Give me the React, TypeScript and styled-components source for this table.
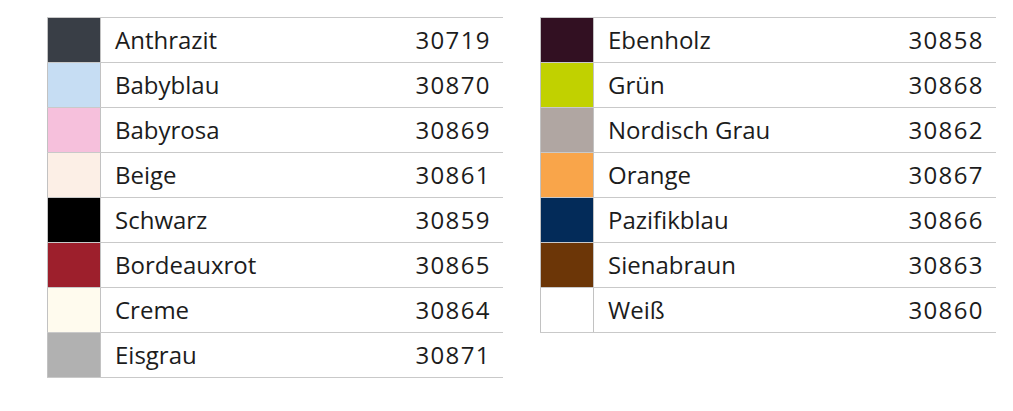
import React from "react";
import styled, { createGlobalStyle } from "styled-components";

const Global = createGlobalStyle`
  html, body { margin: 0; padding: 0; background: #ffffff; }
  body { font-family: "Open Sans", "Noto Sans", sans-serif; color: #1c1c1c; }
`;

const Page = styled.div`
  display: flex;
  align-items: flex-start;
  gap: 37px;
  padding: 17px 0 0 47px;
`;

const Table = styled.div`
  width: 456px;
  display: flex;
  flex-direction: column;
  border-top: 1px solid #c9c9c9;
`;

const Row = styled.div`
  display: grid;
  grid-template-columns: 54px 1fr;
  height: 45px;
  box-sizing: border-box;
  border-bottom: 1px solid #c9c9c9;
`;

const Swatch = styled.div<{ $c: string }>`
  background: ${(p) => p.$c};
  border-left: 1px solid #c2c2c2;
  border-right: 1px solid #c2c2c2;
  box-sizing: border-box;
`;

const Cell = styled.div`
  display: flex;
  align-items: center;
  justify-content: space-between;
  padding: 0 12px 0 14px;
  font-size: 24px;
  line-height: 1;
`;

const Name = styled.span``;

const Code = styled.span`
  letter-spacing: 1.4px;
`;

type Item = [string, string, string];

const left: Item[] = [
  ["Anthrazit", "30719", "#393e46"],
  ["Babyblau", "30870", "#c6ddf3"],
  ["Babyrosa", "30869", "#f6c0dc"],
  ["Beige", "30861", "#fcefe6"],
  ["Schwarz", "30859", "#000000"],
  ["Bordeauxrot", "30865", "#9d1f2c"],
  ["Creme", "30864", "#fffbee"],
  ["Eisgrau", "30871", "#b1b1b1"],
];

const right: Item[] = [
  ["Ebenholz", "30858", "#321022"],
  ["Grün", "30868", "#c1d100"],
  ["Nordisch Grau", "30862", "#b0a6a2"],
  ["Orange", "30867", "#f9a54a"],
  ["Pazifikblau", "30866", "#032b59"],
  ["Sienabraun", "30863", "#6c3607"],
  ["Weiß", "30860", "#ffffff"],
];

const ColorTable = ({ items }: { items: Item[] }) => (
  <Table>
    {items.map(([name, code, c]) => (
      <Row key={code}>
        <Swatch $c={c} />
        <Cell>
          <Name>{name}</Name>
          <Code>{code}</Code>
        </Cell>
      </Row>
    ))}
  </Table>
);

export default function App() {
  return (
    <>
      <Global />
      <Page>
        <ColorTable items={left} />
        <ColorTable items={right} />
      </Page>
    </>
  );
}
